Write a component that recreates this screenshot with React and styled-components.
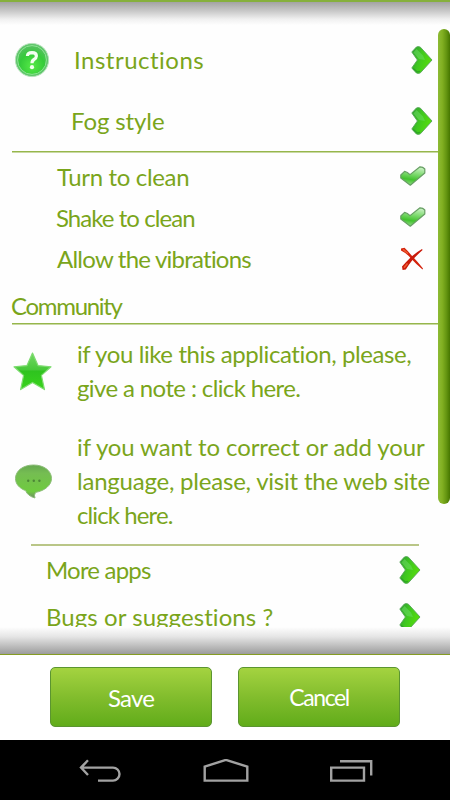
import React from 'react';
import styled, { createGlobalStyle } from 'styled-components';

const GlobalStyle = createGlobalStyle`
  body {
    margin: 0;
    background: #fff;
  }
`;

const Screen = styled.div`
  position: relative;
  display: flex;
  flex-direction: column;
  width: 450px;
  height: 800px;
  overflow: hidden;
  background: #fefefe;
  color: #7aa51b;
  font-family: Lato, 'Open Sans', sans-serif;
  font-size: 24px;
  font-variant-ligatures: none;
`;

const TopShade = styled.div`
  flex: none;
  box-sizing: border-box;
  height: 25px;
  border-top: 2px solid #86b03c;
  background: linear-gradient(#a3a3a3, #c9c9c9 40%, #f0f0f0 75%, #fefefe);
`;

const BottomShade = styled.div`
  flex: none;
  box-sizing: border-box;
  height: 28px;
  border-bottom: 1px solid #869c22;
  background: linear-gradient(#fefefe, #e6e6e6 35%, #c4c4c4 65%, #9c9c9c);
`;

const Content = styled.div`
  flex: none;
  box-sizing: border-box;
  height: 602px;
  padding-top: 5px;
  overflow: hidden;
`;

const Row = styled.div`
  display: flex;
  align-items: center;
  box-sizing: border-box;
  height: ${(p) => p.$height}px;
  padding-left: ${(p) => p.$left}px;
  padding-right: ${(p) => p.$right}px;

  svg {
    flex: none;
  }
`;

const Label = styled.span`
  flex: 1;
  white-space: nowrap;
  line-height: 34px;
  letter-spacing: ${(p) => p.$track || 0}px;
`;

const IconCell = styled.div`
  display: flex;
  flex: none;
  width: ${(p) => p.$width}px;
`;

const Options = styled.div`
  padding: 3px 0 10px;
`;

const Divider = styled.div`
  height: 2px;
  margin-left: 12px;
  margin-right: 12px;
  background: linear-gradient(#96b64b 50%, #c9d9a2 50%);
`;

const ShortDivider = styled(Divider)`
  margin-top: 12px;
  margin-left: 31px;
  margin-right: 31px;
  background: #b9c687;
`;

const SectionTitle = styled.div`
  height: 34px;
  padding-left: 11px;
  line-height: 34px;
  letter-spacing: -1.3px;
`;

const Note = styled.div`
  display: flex;
  align-items: center;
  padding-left: 13px;
  padding-top: ${(p) => p.$top}px;
`;

const NoteText = styled.div`
  display: flex;
  flex-direction: column;
`;

const Scrollbar = styled.div`
  position: absolute;
  top: 29px;
  right: 0;
  width: 12px;
  height: 475px;
  border-radius: 6px;
  background: linear-gradient(90deg, #8dbb35, #82b022 35%, #649511 70%, #467600);
`;

const Footer = styled.div`
  display: flex;
  flex: none;
  justify-content: center;
  align-items: flex-start;
  gap: 26px;
  box-sizing: border-box;
  height: 85px;
  padding-top: 12px;
  background: #fff;
`;

const Button = styled.button`
  box-sizing: border-box;
  width: 162px;
  height: 60px;
  padding: 0;
  border: 1px solid #5b9530;
  border-radius: 5px;
  background: linear-gradient(#a4d340, #82bd2d 50%, #61ac1a);
  color: #fff;
  font-family: inherit;
  font-size: ${(p) => p.$size || 24}px;
  letter-spacing: ${(p) => p.$track || 0}px;
`;

const NavBar = styled.div`
  display: flex;
  flex: none;
  align-items: center;
  justify-content: space-between;
  box-sizing: border-box;
  height: 60px;
  padding: 4px 76px 0 78px;
  background: #000;

  svg {
    fill: none;
    stroke: #a2a2a2;
    stroke-width: 2.4;
  }
`;

const Gradients = styled.svg`
  position: absolute;
  width: 0;
  height: 0;
`;

function Defs() {
  return (
    <Gradients>
      <defs>
        <linearGradient id="chevron" x1="0" y1="0" x2="1" y2="0.4">
          <stop offset="0" stopColor="#2f9a35" />
          <stop offset="0.5" stopColor="#3fc81f" />
          <stop offset="1" stopColor="#55dc0c" />
        </linearGradient>
        <linearGradient id="tick" x1="0.6" y1="0" x2="0.4" y2="1">
          <stop offset="0" stopColor="#c9f2c3" />
          <stop offset="0.4" stopColor="#7bd96c" />
          <stop offset="0.7" stopColor="#42c22e" />
          <stop offset="1" stopColor="#8fdc84" />
        </linearGradient>
        <linearGradient id="star" x1="0" y1="0" x2="0" y2="1">
          <stop offset="0" stopColor="#74d765" />
          <stop offset="0.45" stopColor="#48c93a" />
          <stop offset="0.5" stopColor="#2fc31f" />
          <stop offset="1" stopColor="#39d41c" />
        </linearGradient>
        <radialGradient id="help" cx="0.5" cy="0.7" r="0.65">
          <stop offset="0" stopColor="#55ea46" />
          <stop offset="0.65" stopColor="#35cb3a" />
          <stop offset="1" stopColor="#52c25c" />
        </radialGradient>
        <linearGradient id="bubble" x1="0" y1="0" x2="0" y2="1">
          <stop offset="0" stopColor="#66a851" />
          <stop offset="0.25" stopColor="#75bd52" />
          <stop offset="0.8" stopColor="#6fcb3f" />
          <stop offset="1" stopColor="#6f8a68" />
        </linearGradient>
      </defs>
    </Gradients>
  );
}

function Chevron() {
  return (
    <svg width="22" height="28" viewBox="0 0 22 28">
      <path
        d="M0.8 6 L5.4 1 Q7.4 0 9.4 1.2 L21 14 L9.4 26.8 Q7.4 28 5.4 27 L0.8 22 L6.4 14 Z"
        fill="url(#chevron)"
        stroke="#55a557"
        strokeWidth="0.9"
        strokeLinejoin="round"
      />
      <path d="M2.4 6.4 L5.6 3 L12 9.5 L14 14 L8 13 Z" fill="#66d95c" opacity="0.6" />
      <path d="M2.2 22.4 L6.2 26 L9 25.4" fill="none" stroke="#1f8a2a" strokeWidth="1.4" opacity="0.55" />
    </svg>
  );
}

function Tick() {
  return (
    <svg width="26" height="22" viewBox="0 0 26 22">
      <path
        d="M0.8 9 L4.6 5.4 Q7.5 6 10 8.6 L20 0.8 Q23 0.8 24.8 3 L24.8 7 L10.3 19.2 L0.8 12 Z"
        fill="url(#tick)"
        stroke="#679e63"
        strokeWidth="1.2"
        strokeLinejoin="round"
      />
    </svg>
  );
}

function Cross() {
  return (
    <svg width="24" height="24" viewBox="0 0 24 24">
      <path d="M1 1.5 L4.5 0.8 Q8 4 12.5 9.5 Q17 14 23 21.5 L22.5 22.5 Q16 17 11 11.5 Q7 6.5 1 3.5 Z" fill="#d3220c" />
      <path d="M22 2 L22.6 3 Q16 9 12.5 13 Q8.5 18 5.8 22.6 L2.6 23 L2 19.5 Q6 15 10.5 10.5 Q16 5.5 22 2 Z" fill="#c91a0a" />
      <path d="M3 2.3 L8 6.5 M4 20.8 L7.5 16.5" stroke="#ee5b31" strokeWidth="1.6" />
    </svg>
  );
}

function HelpIcon() {
  return (
    <svg width="36" height="36" viewBox="0 0 36 36">
      <circle cx="18" cy="18" r="16.6" fill="#5fc66b" stroke="#b5e2b9" strokeWidth="1" />
      <circle cx="18" cy="18" r="14.4" fill="url(#help)" stroke="#8ee394" strokeWidth="1" />
      <path
        d="M13.4 14 Q13.6 10.6 18 10.6 Q22.4 10.7 22.4 14 Q22.3 16.2 20 17.5 Q18 18.6 18 21.2"
        fill="none"
        stroke="#f2fff0"
        strokeWidth="3.2"
      />
      <circle cx="18" cy="25.2" r="2.1" fill="#f2fff0" />
    </svg>
  );
}

function StarIcon() {
  return (
    <svg width="39" height="39" viewBox="0 0 39 39">
      <path
        d="M19.5 1 L25 13.6 L38 14.8 L28.4 23.4 L31.5 37.6 L19.5 30.4 L7.6 37.6 L10.6 23.4 L1 14.8 L14 13.6 Z"
        fill="url(#star)"
        stroke="#7edc70"
        strokeWidth="1.2"
        strokeLinejoin="round"
      />
    </svg>
  );
}

function BubbleIcon() {
  return (
    <svg width="40" height="35" viewBox="-2 0 40 35">
      <path
        d="M18.5 1 C29 1 36.5 6.8 36.5 14.5 C36.5 21 30 26.8 20.5 28.4 Q18.6 31.4 20 34 Q12.6 32 10.6 26.6 C4.5 24.4 0.5 20 0.5 14.5 C0.5 6.8 8 1 18.5 1 Z"
        fill="url(#bubble)"
        stroke="#8dbd79"
        strokeWidth="1"
      />
      <g fill="#4c8736">
        <circle cx="13.2" cy="16.8" r="1.2" />
        <circle cx="18.8" cy="16.8" r="1.2" />
        <circle cx="24.4" cy="16.8" r="1.2" />
      </g>
    </svg>
  );
}

export default function App() {
  return (
    <Screen>
      <GlobalStyle />
      <Defs />
      <TopShade />
      <Content>
        <Row $height={60} $left={14} $right={17}>
          <IconCell $width={60}>
            <HelpIcon />
          </IconCell>
          <Label $track={0.5}>Instructions</Label>
          <Chevron />
        </Row>
        <Row $height={61} $left={71} $right={17}>
          <Label $track={-0.1}>Fog style</Label>
          <Chevron />
        </Row>
        <Divider />
        <Options>
          <Row $height={41} $left={57} $right={24}>
            <Label $track={-0.35}>Turn to clean</Label>
            <Tick />
          </Row>
          <Row $height={41} $left={56} $right={24}>
            <Label $track={-0.95}>Shake to clean</Label>
            <Tick />
          </Row>
          <Row $height={41} $left={57} $right={26}>
            <Label $track={-0.77}>Allow the vibrations</Label>
            <Cross />
          </Row>
        </Options>
        <SectionTitle>Community</SectionTitle>
        <Divider />
        <Note $top={12}>
          <IconCell $width={64}>
            <StarIcon />
          </IconCell>
          <NoteText>
            <Label $track={-0.4}>if you like this application, please,</Label>
            <Label $track={-0.62}>give a note : click here.</Label>
          </NoteText>
        </Note>
        <Note $top={25}>
          <IconCell $width={64}>
            <BubbleIcon />
          </IconCell>
          <NoteText>
            <Label $track={-0.12}>if you want to correct or add your</Label>
            <Label $track={-0.22}>language, please, visit the web site</Label>
            <Label $track={-0.9}>click here.</Label>
          </NoteText>
        </Note>
        <ShortDivider />
        <Row $height={47} $left={46} $right={29}>
          <Label $track={-0.8}>More apps</Label>
          <Chevron />
        </Row>
        <Row $height={48} $left={46} $right={29}>
          <Label $track={0.07}>Bugs or suggestions ?</Label>
          <Chevron />
        </Row>
      </Content>
      <BottomShade />
      <Scrollbar />
      <Footer>
        <Button $track={-0.8}>Save</Button>
        <Button $size={23} $track={-1.4}>Cancel</Button>
      </Footer>
      <NavBar>
        <svg width="44" height="26" viewBox="0 0 44 26">
          <path d="M10 1.2 L3 8.6 L10 16 M3 8.6 H35 A6.5 6.5 0 0 1 35 21.6 H20" />
        </svg>
        <svg width="46" height="26" viewBox="0 0 46 26">
          <path d="M1.7 21.6 V7.6 L22.9 0.9 L44.3 7.6 V21.6 Z" />
        </svg>
        <svg width="45" height="26" viewBox="0 0 45 26">
          <path d="M2.2 8.6 H35 V21.6 H2.2 Z M11 2.2 H42.2 V16.6" />
        </svg>
      </NavBar>
    </Screen>
  );
}
